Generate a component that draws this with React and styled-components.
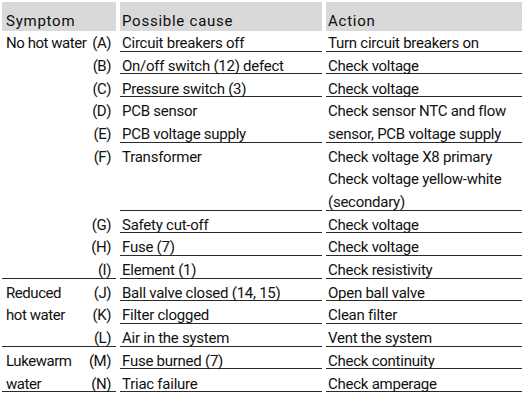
import React from 'react';
import styled, { createGlobalStyle } from 'styled-components';

const GlobalStyle = createGlobalStyle`
  html, body {
    margin: 0;
    padding: 0;
    background: #fff;
  }
  body {
    font-family: Roboto, "Liberation Sans", sans-serif;
    color: #111;
  }
`;

const Table = styled.div`
  display: grid;
  grid-template-columns: 114px 202px 196px;
  column-gap: 4px;
  padding: 2px 3px 0 2px;
  font-size: 15px;
  letter-spacing: -0.25px;
`;

const HeadCell = styled.div`
  height: 29px;
  box-sizing: border-box;
  background: #d9d9d9;
  padding: 10.8px 0 0 ${(p) => p.$pad || 2}px;
  line-height: 17.6px;
  letter-spacing: 0.75px;
  color: #0d0d0d;
`;

const Body = styled.div`
  display: contents;
`;

const Cell = styled.div`
  box-shadow: ${(p) => (p.$rule ? 'inset 0 -1px 0 #2a2a2a' : 'none')};
  padding-left: ${(p) => p.$pad || 2}px;
  margin-top: ${(p) => (p.$first ? '-1.9px' : '0')};
`;

const SymptomCell = styled(Cell)`
  display: flex;
  justify-content: space-between;
  padding-right: 5px;
  letter-spacing: -0.45px;
`;

const Letters = styled.div`
  text-align: right;
`;

const Line = styled.div`
  padding-top: 6.1px;
  line-height: 16.6px;
  white-space: nowrap;
`;

const rows = [
  { sym: ['No hot water'], letters: ['(A)'], cause: ['Circuit breakers off'], action: ['Turn circuit breakers on'] },
  { letters: ['(B)'], cause: ['On/off switch (12) defect'], action: ['Check voltage'] },
  { letters: ['(C)'], cause: ['Pressure switch (3)'], action: ['Check voltage'] },
  {
    letters: ['(D)', '(E)'],
    cause: ['PCB sensor', 'PCB voltage supply'],
    action: ['Check sensor NTC and flow', 'sensor, PCB voltage supply'],
  },
  {
    letters: ['(F)'],
    cause: ['Transformer'],
    action: ['Check voltage X8 primary', 'Check voltage yellow-white', '(secondary)'],
  },
  { letters: ['(G)'], cause: ['Safety cut-off'], action: ['Check voltage'] },
  { letters: ['(H)'], cause: ['Fuse (7)'], action: ['Check voltage'] },
  { letters: ['(I)'], cause: ['Element (1)'], action: ['Check resistivity'], end: true },
  { sym: ['Reduced'], letters: ['(J)'], cause: ['Ball valve closed (14, 15)'], action: ['Open ball valve'] },
  { sym: ['hot water'], letters: ['(K)'], cause: ['Filter clogged'], action: ['Clean filter'] },
  { letters: ['(L)'], cause: ['Air in the system'], action: ['Vent the system'], end: true },
  { sym: ['Lukewarm'], letters: ['(M)'], cause: ['Fuse burned (7)'], action: ['Check continuity'] },
  { sym: ['water'], letters: ['(N)'], cause: ['Triac failure'], action: ['Check amperage'], end: true },
];

const Lines = ({ items = [] }) => items.map((t, i) => <Line key={i}>{t}</Line>);

export default function App() {
  return (
    <>
      <GlobalStyle />
      <Table>
        <HeadCell $pad={4}>Symptom</HeadCell>
        <HeadCell>Possible cause</HeadCell>
        <HeadCell>Action</HeadCell>
        <Body>
          {rows.map((r, i) => (
            <React.Fragment key={i}>
              <SymptomCell $pad={4} $rule={r.end} $first={i === 0}>
                <div>
                  <Lines items={r.sym} />
                </div>
                <Letters>
                  <Lines items={r.letters} />
                </Letters>
              </SymptomCell>
              <Cell $rule $first={i === 0}>
                <Lines items={r.cause} />
              </Cell>
              <Cell $rule $first={i === 0}>
                <Lines items={r.action} />
              </Cell>
            </React.Fragment>
          ))}
        </Body>
      </Table>
    </>
  );
}
